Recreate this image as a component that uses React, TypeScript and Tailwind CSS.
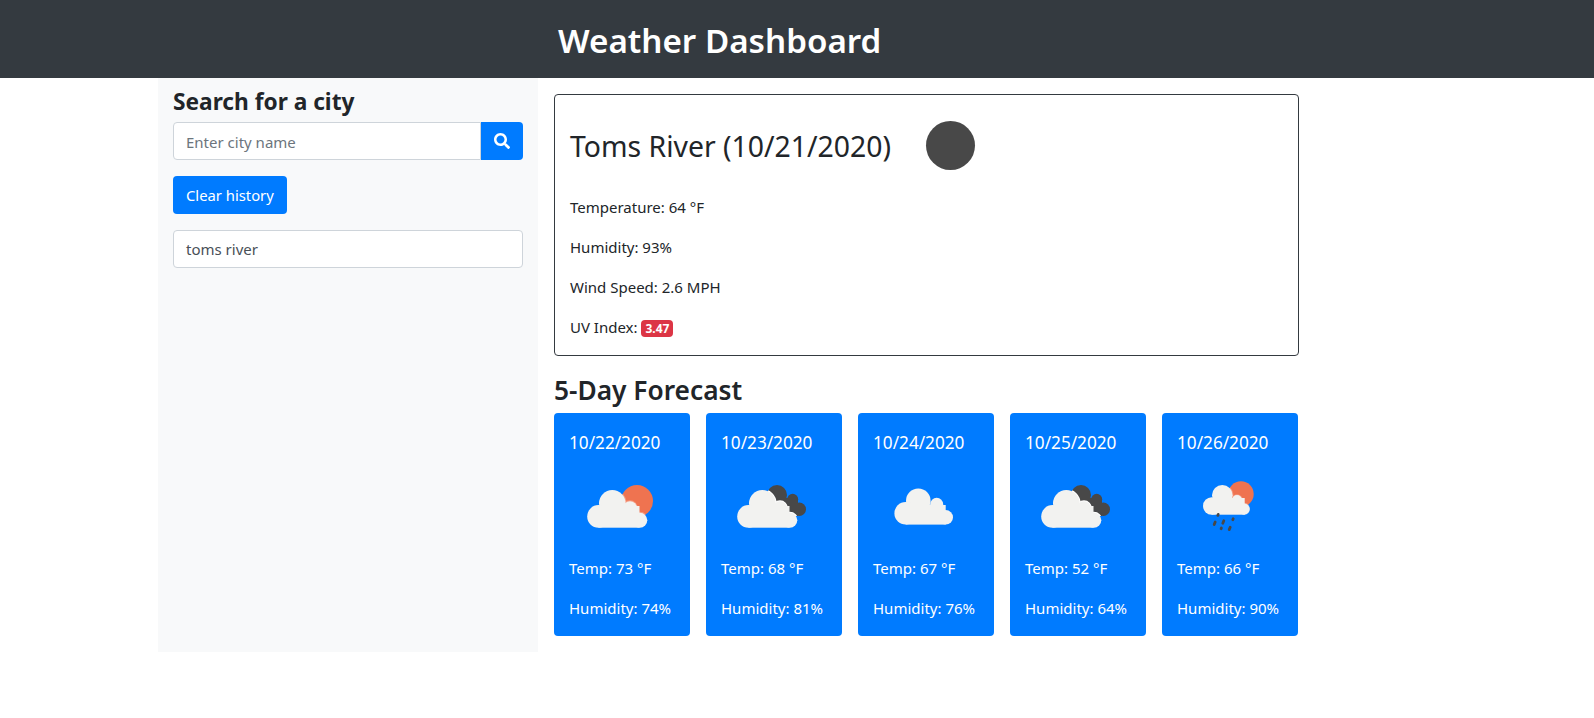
import { FaSearch } from 'react-icons/fa';

const CLOUD_WHITE = '#f2f2f0';
const SUN = '#ef7350';
const DARK = '#484848';

// big cloud used on the "few clouds" and "broken clouds" icons
const BigCloud = ({ fill }: { fill: string }) => (
  <g fill={fill}>
    <circle cx="42.3" cy="43.3" r="13.3" />
    <circle cx="28.5" cy="56.4" r="11.3" />
    <circle cx="60" cy="48.3" r="7" />
    <circle cx="69.8" cy="60.2" r="7.5" />
    <rect x="28.5" y="46" width="41" height="21.7" />
  </g>
);

// thin light edge where the cloud sits on the shape behind it
const Halo = ({ stroke, clip }: { stroke: string; clip: string }) => (
  <g fill="none" stroke={stroke} strokeWidth="2" clipPath={`url(#${clip})`}>
    <circle cx="42.3" cy="43.3" r="13.3" />
    <circle cx="60" cy="48.3" r="7" />
    <circle cx="69.8" cy="60.2" r="7.5" />
  </g>
);

const SunCloud = () => (
  <svg viewBox="0 -4 100 100" className="block h-[100px] w-[100px]">
    <clipPath id="sun-clip">
      <circle cx="67" cy="41" r="16" />
    </clipPath>
    <circle cx="67" cy="41" r="16" fill={SUN} />
    <Halo stroke="#f59a80" clip="sun-clip" />
    <BigCloud fill={CLOUD_WHITE} />
  </svg>
);

const DarkShape = () => (
  <>
    <circle cx="57" cy="35" r="10" />
    <circle cx="72.7" cy="39.3" r="5.5" />
    <circle cx="79.3" cy="49.3" r="6.7" />
    <rect x="56" y="38" width="22" height="18" />
  </>
);

const DarkCloud = () => (
  <svg viewBox="2 -4 100 100" className="block h-[100px] w-[100px]">
    <clipPath id="dark-clip">
      <DarkShape />
    </clipPath>
    <g fill={DARK}>
      <DarkShape />
    </g>
    <Halo stroke="#ffffff" clip="dark-clip" />
    <BigCloud fill={CLOUD_WHITE} />
  </svg>
);

const PlainCloud = () => (
  <svg viewBox="0 -4 100 100" className="block h-[100px] w-[100px]">
    <g fill={CLOUD_WHITE}>
      <circle cx="44.3" cy="40.7" r="12.3" />
      <circle cx="31.7" cy="53.3" r="11.3" />
      <circle cx="62.7" cy="44.3" r="6.5" />
      <circle cx="71.7" cy="57.3" r="7.3" />
      <rect x="31.7" y="45" width="40" height="19.6" />
    </g>
  </svg>
);

const RainCloud = () => (
  <svg viewBox="-1 -4 100 100" className="block h-[100px] w-[100px]">
    <clipPath id="rain-sun-clip">
      <circle cx="62" cy="34" r="12.7" />
    </clipPath>
    <circle cx="62" cy="34" r="12.7" fill={SUN} />
    <g fill="none" stroke="#f59a80" strokeWidth="1.6" clipPath="url(#rain-sun-clip)">
      <circle cx="43.3" cy="35.3" r="10.3" />
      <circle cx="58" cy="40" r="5" />
      <circle cx="65.3" cy="49.1" r="5.6" />
    </g>
    <g fill={CLOUD_WHITE}>
      <circle cx="43.3" cy="35.3" r="10.3" />
      <circle cx="32.7" cy="46" r="8.7" />
      <circle cx="58" cy="40" r="5" />
      <circle cx="65.3" cy="49.1" r="5.6" />
      <rect x="32.7" y="38" width="33" height="16.7" />
    </g>
    <g stroke={DARK} strokeWidth="2.8" strokeLinecap="round">
      <path d="M39.2 54.4 L38.8 55.4" />
      <path d="M36.2 62 L35.2 64.6" />
      <path d="M44.8 60.8 L43.8 63.2" />
      <path d="M54.2 58.8 L53.8 59.8" />
      <path d="M42.4 68 L42.1 68.8" />
      <path d="M51.2 67.2 L50.2 69.6" />
    </g>
  </svg>
);

const forecast = [
  { date: '10/22/2020', icon: <SunCloud />, temp: 73, humidity: 74 },
  { date: '10/23/2020', icon: <DarkCloud />, temp: 68, humidity: 81 },
  { date: '10/24/2020', icon: <PlainCloud />, temp: 67, humidity: 76 },
  { date: '10/25/2020', icon: <DarkCloud />, temp: 52, humidity: 64 },
  { date: '10/26/2020', icon: <RainCloud />, temp: 66, humidity: 90 },
];

const App = () => {
  return (
    <div className="min-h-[718px] bg-white font-['Noto_Sans',sans-serif] text-[15px] leading-6 text-[#212529]">
      {/* Title bar */}
      <header className="flex h-[78px] items-center bg-[#343a40] pl-[558px] pt-[3px]">
        <h1 className="text-[33.2px] font-semibold leading-none text-white">Weather Dashboard</h1>
      </header>

      <div className="ml-[158px] flex items-start">
        {/* Search sidebar */}
        <aside className="h-[574px] w-[380px] bg-[#f8f9fa] px-[15px]">
          <h4 className="h-[44px] pt-[9px] text-[22.7px] font-bold leading-[30px]">Search for a city</h4>
          <div className="flex h-[38px]">
            <div className="flex flex-1 items-center rounded-l-[4px] border border-[#ced4da] bg-white px-[12px] pt-[1px] text-[#6c757d]">
              Enter city name
            </div>
            <button className="flex w-[42px] items-center justify-center rounded-r-[4px] bg-[#007bff] text-white">
              <FaSearch className="h-4 w-4" />
            </button>
          </div>
          <button className="mt-4 block h-[38px] rounded-[4px] bg-[#007bff] px-[13px] text-[14.8px] text-white">Clear history</button>
          <div className="mt-4 flex h-[38px] items-center rounded-[4px] border border-[#ced4da] bg-white px-[12px] text-[#495057]">
            toms river
          </div>
        </aside>

        {/* Current weather + forecast */}
        <main className="w-[761px] pl-4 pt-4">
          <section className="rounded-[4px] border border-[#343a40] pb-4 pl-[15px] pr-4 pt-4">
            <div className="mb-4 flex h-[68px] items-center">
              <h2 className="w-[356px] pt-[2px] text-[28.4px] font-normal leading-9">Toms River (10/21/2020)</h2>
              <span className="h-[49px] w-[49px] rounded-full bg-[#484848]"></span>
            </div>
            <p className="mb-4">Temperature: 64 °F</p>
            <p className="mb-4">Humidity: 93%</p>
            <p className="mb-4">Wind Speed: 2.6 MPH</p>
            <p>
              UV Index:{' '}
              <span className="inline-block rounded-[4px] bg-[#dc3545] px-[4px] align-baseline text-[12px] font-bold leading-[17px] text-white">
                3.47
              </span>
            </p>
          </section>

          <h3 className="mt-[16px] h-[41px] text-[26.3px] font-semibold leading-[36px]">5-Day Forecast</h3>

          <div className="flex gap-4">
            {forecast.map((day) => (
              <div key={day.date} className="h-[223px] w-[136px] shrink-0 rounded-[4px] bg-[#007bff] pl-[15px] pr-4 pt-4 text-white">
                <h5 className="h-[27px] text-[17.2px] font-normal leading-[28px]">{day.date}</h5>
                <div className="ml-[1px]">{day.icon}</div>
                <p className="mb-4 whitespace-nowrap">Temp: {day.temp} °F</p>
                <p className="whitespace-nowrap">Humidity: {day.humidity}%</p>
              </div>
            ))}
          </div>
        </main>
      </div>
    </div>
  );
};

export default App;
